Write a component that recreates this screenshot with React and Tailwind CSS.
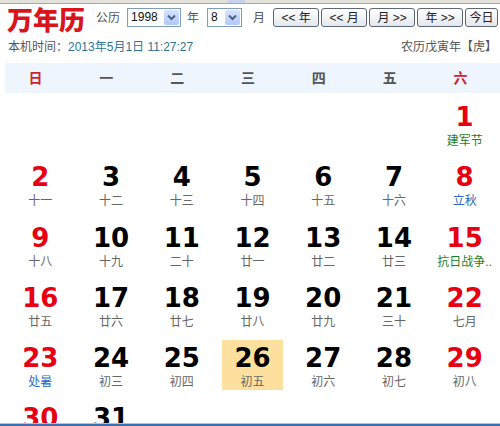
import React from "react";

const CJK = '"Liberation Sans", "Noto Sans CJK SC", sans-serif';

const weekdays = ["日", "一", "二", "三", "四", "五", "六"];

const days = [
  [null, null, null, null, null, null, [1, "建军节", "g"]],
  [[2, "十一"], [3, "十二"], [4, "十三"], [5, "十四"], [6, "十五"], [7, "十六"], [8, "立秋", "b"]],
  [[9, "十八"], [10, "十九"], [11, "二十"], [12, "廿一"], [13, "廿二"], [14, "廿三"], [15, "抗日战争..", "g"]],
  [[16, "廿五"], [17, "廿六"], [18, "廿七"], [19, "廿八"], [20, "廿九"], [21, "三十"], [22, "七月"]],
  [[23, "处暑", "b"], [24, "初三"], [25, "初四"], [26, "初五", null, true], [27, "初六"], [28, "初七"], [29, "初八"]],
  [[30, ""], [31, ""], null, null, null, null, null],
];

function Select({ value, width }) {
  return (
    <div className={`flex h-[19px] border border-[#7f9db9] bg-white ${width}`}>
      <div className="flex-1 pl-[3px] text-[12px] leading-[17px] text-[#111]" style={{ fontFamily: '"Liberation Sans", sans-serif' }}>
        {value}
      </div>
      <div className="m-px flex w-[15px] items-center justify-center rounded-[2px] bg-gradient-to-b from-[#d6e2fd] to-[#b2c8f8]">
        <svg width="9" height="7" viewBox="0 0 9 7">
          <path d="M1 1.5 L4.5 5 L8 1.5" fill="none" stroke="#4d6185" strokeWidth="2" />
        </svg>
      </div>
    </div>
  );
}

function Btn({ children, width }) {
  return (
    <div className={`flex h-[19px] items-center justify-center rounded-[3px] border border-[#5c6878] bg-gradient-to-b from-[#ffffff] to-[#e3e7ec] text-[12px] leading-none text-[#222] ${width}`}>
      {children}
    </div>
  );
}

export default function App() {
  return (
    <div className="flex h-[426px] w-[500px] flex-col overflow-hidden bg-white" style={{ fontFamily: CJK }}>
      <div className="flex h-[4px] shrink-0 border-b border-[#a9a9a0] bg-[#e2e2da]">
        <div className="ml-[228px] w-[17px] bg-[#c5d4ec]" />
      </div>

      <div className="flex shrink-0 items-start pl-[7px]">
        <div
          className="mt-[2px] text-[26px] font-black leading-[26px] text-[#d8141c]"
          style={{ fontFamily: '"Noto Sans CJK SC", serif' }}
        >
          万年历
        </div>
        <div className="ml-[11px] mt-[4px] flex h-[19px] items-center text-[12px] text-[#555]">
          <span>公历</span>
          <div className="ml-[7px]">
            <Select value="1998" width="w-[54px]" />
          </div>
          <span className="ml-[6px]">年</span>
          <div className="ml-[8px]">
            <Select value="8" width="w-[35px]" />
          </div>
          <span className="ml-[11px]">月</span>
          <div className="ml-[8px] flex gap-[2px]">
            <Btn width="w-[46px]">{"<< 年"}</Btn>
            <Btn width="w-[46px]">{"<< 月"}</Btn>
            <Btn width="w-[46px]">{"月 >>"}</Btn>
            <Btn width="w-[46px]">{"年 >>"}</Btn>
            <Btn width="w-[33px]">今日</Btn>
          </div>
        </div>
      </div>

      <div className="mt-[8px] flex shrink-0 justify-between pl-[8px] pr-[3px] text-[12px] leading-[14px] text-[#555]">
        <div>
          本机时间：<span className="text-[#2f7592]">2013年5月1日 11:27:27</span>
        </div>
        <div>农历戊寅年【虎】</div>
      </div>

      <div className="ml-[5px] mt-[9px] h-[30px] shrink-0 bg-[#eef5fc]">
        <div className="-ml-[5px] grid h-[30px] w-[496px] grid-cols-7">
          {weekdays.map((w, i) => (
            <div
              key={w}
              className={`flex items-center justify-center text-[14px] font-bold ${i === 0 || i === 6 ? "text-[#cc2233]" : "text-[#555]"}`}
            >
              {w}
            </div>
          ))}
        </div>
      </div>

      <div className="ml-[5px] min-h-0 w-[495px] flex-1 overflow-hidden">
        {days.map((row, ri) => (
          <div key={ri} className="grid h-[60.3px] grid-cols-7">
            {row.map((d, ci) => {
              if (!d) return <div key={ci} />;
              const [n, lunar, kind, today] = d;
              const red = ci === 0 || ci === 6;
              const lunarColor = kind === "g" ? "text-[#1e7f2a]" : kind === "b" ? "text-[#2a6cc0]" : "text-[#666]";
              return (
                <div key={ci} className="flex flex-col">
                  <div className={`mx-[5px] mt-[6px] flex h-[50px] flex-col items-center pt-[5px] ${today ? "bg-[#fde09e]" : ""}`}>
                    <div
                      className={`text-[26px] font-bold leading-[26px] ${red ? "text-[#e60012]" : "text-black"}`}
                      style={{ fontFamily: '"DejaVu Sans", sans-serif' }}
                    >
                      {n}
                    </div>
                    <div className={`mt-[4px] whitespace-nowrap text-[12px] leading-[14px] ${lunarColor}`}>{lunar}</div>
                  </div>
                </div>
              );
            })}
          </div>
        ))}
      </div>

      <div className="h-[3px] shrink-0 border-t border-[#a9c4e4] bg-[#3d6fb0]" />
    </div>
  );
}
